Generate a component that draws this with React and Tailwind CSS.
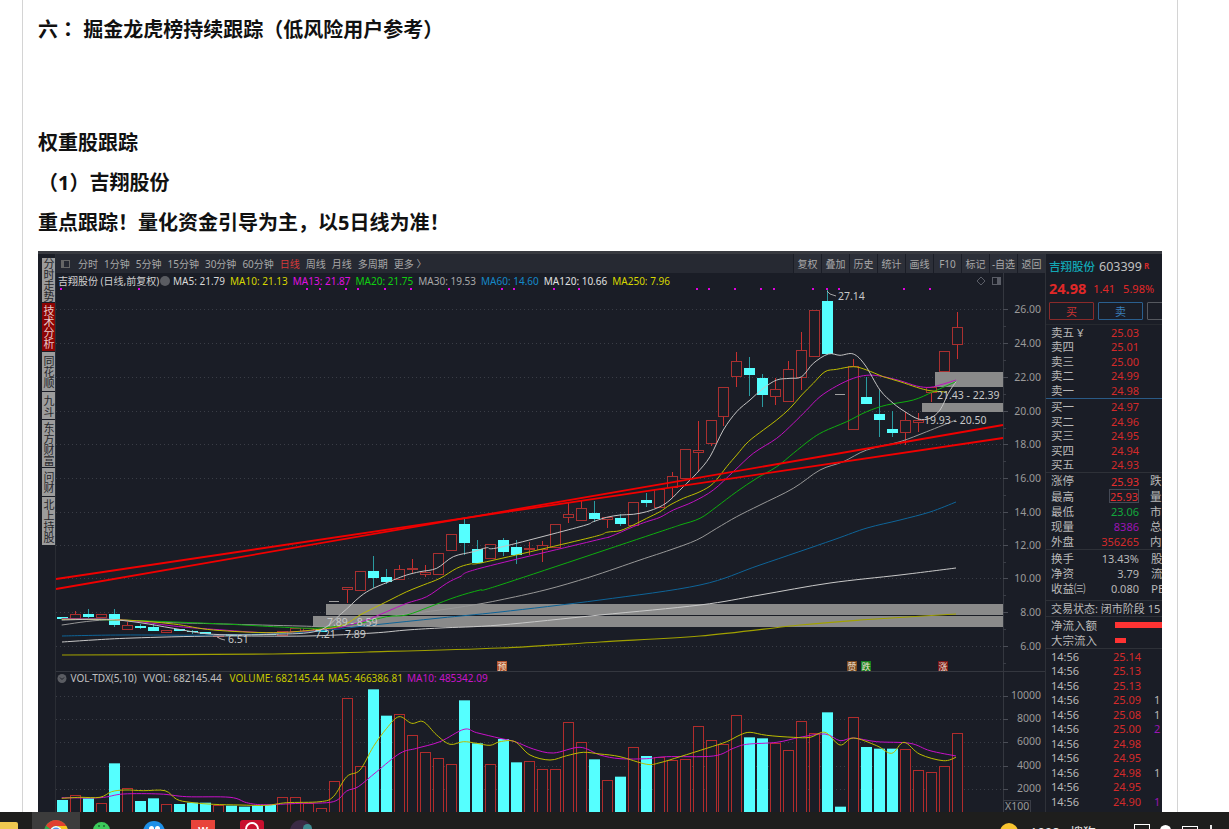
import React from "react";

const xAt = (i) => Math.round(62 + 12.97 * i);
const z6 = (pts) => pts.map(([x, y]) => [40 + x / 3, 500 + y / 3]);
const z7 = (pts) => pts.map(([x, y]) => [500 + x / 3, 280 + y / 3]);
const z4 = (pts) => pts.map(([x, y]) => [x / 3, 660 + y / 3]);
const z5 = (pts) => pts.map(([x, y]) => [500 + x / 3, 660 + y / 3]);

// catmull-rom through the points so the averages read as curves
const smooth = (pts) => {
  let d = `M${pts[0][0].toFixed(1)} ${pts[0][1].toFixed(1)}`;
  for (let i = 0; i < pts.length - 1; i++) {
    const p0 = pts[i - 1] || pts[i];
    const p1 = pts[i];
    const p2 = pts[i + 1];
    const p3 = pts[i + 2] || p2;
    const c1x = p1[0] + (p2[0] - p0[0]) / 6;
    const c1y = p1[1] + (p2[1] - p0[1]) / 6;
    const c2x = p2[0] - (p3[0] - p1[0]) / 6;
    const c2y = p2[1] - (p3[1] - p1[1]) / 6;
    d += ` C${c1x.toFixed(1)} ${c1y.toFixed(1)} ${c2x.toFixed(1)} ${c2y.toFixed(1)} ${p2[0].toFixed(1)} ${p2[1].toFixed(1)}`;
  }
  return d;
};

// type, body top, body bottom, wick top, wick bottom
const candles = [
  ["c", 617, 619, 617, 620], ["r", 614, 618, 611, 618], ["c", 614, 617, 609, 618], ["r", 614, 617, 614, 617],
  ["c", 614, 625, 609, 627], ["r", 625, 629, 622, 629], ["c", 626, 628, 624, 629], ["c", 627, 631, 624, 631],
  ["r", 630, 632, 630, 632], ["c", 629, 631, 629, 631], ["c", 631, 632, 630, 634], ["c", 632, 634, 632, 634],
  ["r", 635, 636, 635, 638], ["c", 634, 636, 634, 636], ["c", 634, 635, 634, 635], ["c", 634, 635, 634, 635],
  ["c", 634, 635, 634, 635], ["r", 631, 635, 631, 635], ["r", 628, 631, 628, 631], ["r", 628, 631, 628, 631],
  ["c", 629, 632, 629, 632], ["g", 601, 602, 601, 602], ["r", 587, 589, 587, 603], ["r", 571, 590, 571, 590],
  ["c", 571, 578, 556, 588], ["c", 577, 582, 569, 584], ["r", 569, 579, 565, 579], ["r", 568, 569, 559, 573],
  ["r", 572, 574, 565, 577], ["r", 553, 574, 553, 574], ["r", 534, 550, 534, 550], ["c", 524, 543, 519, 555],
  ["c", 549, 563, 540, 563], ["r", 544, 558, 544, 558], ["c", 540, 552, 538, 556], ["c", 547, 555, 540, 564],
  ["r", 548, 549, 542, 555], ["r", 545, 549, 541, 562], ["r", 524, 547, 524, 547], ["r", 514, 517, 503, 523],
  ["r", 508, 520, 501, 520], ["c", 513, 519, 501, 522], ["r", 517, 519, 517, 528], ["c", 518, 524, 514, 526],
  ["r", 502, 525, 502, 525], ["c", 500, 503, 493, 507], ["r", 489, 507, 489, 507], ["r", 476, 487, 472, 498],
  ["r", 449, 478, 449, 478], ["r", 450, 452, 421, 472], ["r", 420, 443, 420, 446], ["r", 387, 416, 387, 426],
  ["r", 361, 376, 352, 387], ["c", 368, 375, 357, 396], ["c", 378, 395, 374, 407], ["r", 389, 396, 378, 405],
  ["r", 369, 401, 361, 401], ["r", 350, 377, 332, 390], ["r", 310, 356, 310, 356], ["c", 301, 354, 290, 354],
  ["g", 394, 395, 394, 395], ["r", 366, 429, 359, 429], ["c", 397, 404, 377, 404], ["c", 414, 420, 390, 437],
  ["c", 429, 433, 411, 437], ["r", 420, 432, 412, 445], ["r", 420, 422, 413, 432], ["r", 387, 392, 387, 402],
  ["r", 351, 371, 351, 371], ["r", 327, 344, 312, 359],
];

const volumes = [
  ["c", 420], ["r", 404], ["c", 415], ["r", 430], ["c", 310], ["r", 383], ["c", 423], ["c", 415], ["r", 433], ["c", 432],
  ["c", 428], ["c", 428], ["r", 435], ["c", 437], ["c", 440], ["c", 437], ["c", 435], ["r", 412], ["r", 411], ["r", 430],
  ["r", 445], ["r", 362], ["r", 113], ["r", 317], ["c", 88], ["c", 167], ["r", 163], ["r", 226], ["r", 276], ["r", 293],
  ["r", 311], ["c", 121], ["c", 250], ["r", 312], ["c", 237], ["c", 307], ["r", 302], ["r", 326], ["r", 326], ["r", 187],
  ["r", 247], ["c", 298], ["r", 360], ["c", 350], ["r", 260], ["c", 288], ["r", 292], ["r", 300], ["r", 298], ["r", 199],
  ["r", 240], ["r", 253], ["r", 165], ["c", 232], ["c", 235], ["r", 250], ["r", 271], ["r", 184], ["r", 220], ["c", 157],
  ["c", 440], ["r", 170], ["c", 261], ["c", 266], ["c", 266], ["r", 268], ["r", 329], ["r", 335], ["r", 319], ["r", 218],
];

const ma5 = [
  ...z6([[65, 360], [200, 358], [300, 368], [400, 385], [520, 403], [700, 403], [835, 392], [905, 340], [960, 290], [1000, 265], [1060, 240], [1100, 225], [1140, 215], [1190, 205], [1240, 170], [1300, 155], [1340, 143], [1380, 142]]),
  ...z7([[240, 740], [280, 725], [320, 712], [360, 705], [400, 703], [440, 695], [480, 680], [510, 660], [550, 620], [590, 580], [630, 530], [670, 450], [710, 395], [750, 360], [790, 325], [830, 300], [870, 295], [905, 290], [940, 250], [985, 222], [1020, 226], [1060, 222], [1095, 255], [1140, 330], [1180, 370], [1215, 395], [1255, 417], [1290, 415], [1320, 390], [1345, 340], [1368, 305]]),
];
const ma10 = [
  ...z6([[65, 358], [250, 360], [400, 372], [520, 390], [700, 398], [840, 388], [895, 380], [930, 365], [960, 345], [1000, 325], [1050, 300], [1100, 275], [1150, 255], [1200, 235], [1250, 205], [1290, 192], [1340, 185]]),
  ...z7([[270, 773], [320, 757], [360, 752], [400, 735], [440, 715], [480, 695], [510, 675], [550, 655], [600, 635], [640, 610], [680, 560], [710, 525], [745, 485], [790, 450], [830, 420], [870, 385], [905, 345], [940, 310], [975, 275], [1010, 268], [1060, 260], [1100, 270], [1150, 290], [1200, 305], [1250, 322], [1290, 332], [1340, 336]]),
];
const ma13 = [
  ...z6([[65, 356], [250, 360], [400, 378], [520, 388], [700, 398], [880, 385], [930, 375], [980, 360], [1040, 335], [1100, 310], [1160, 290], [1220, 250], [1260, 230], [1320, 205]]),
  ...z7([[290, 780], [330, 770], [400, 740], [440, 725], [480, 712], [520, 690], [580, 665], [640, 630], [700, 575], [760, 520], [830, 475], [880, 430], [920, 390], [960, 350], [1010, 318], [1060, 295], [1100, 286], [1140, 288], [1200, 302], [1250, 318], [1290, 322], [1330, 312], [1368, 300]]),
];
const ma20 = [
  ...z6([[65, 356], [300, 362], [550, 372], [700, 380], [820, 385], [900, 378], [960, 370], [1040, 350], [1100, 345], [1170, 320], [1250, 290], [1320, 270], [1380, 255]]),
  ...z7([[480, 755], [540, 735], [600, 715], [650, 680], [710, 635], [770, 595], [830, 560], [880, 520], [930, 480], [970, 455], [1040, 425], [1100, 395], [1160, 375], [1240, 360], [1300, 335], [1368, 305]]),
];
const ma30 = [
  ...z6([[65, 375], [200, 360], [400, 368], [550, 372], [780, 378], [880, 380], [960, 365], [1080, 345], [1200, 330], [1300, 315], [1380, 300]]),
  [545, 590], [590, 577], [640, 560], [670, 550],
  ...z7([[590, 780], [650, 745], [710, 710], [780, 675], [880, 625], [960, 570], [1030, 545], [1100, 510], [1200, 485], [1280, 455], [1368, 420]]),
];
const ma60 = [[62, 636], [120, 635], [217, 635], [307, 632], [373, 625], [440, 618], [500, 612], [600, 600], [700, 585], [760, 565], [833, 540], [867, 528], [900, 520], [930, 512], [956, 502]];
const ma120 = [[62, 642], [93, 640], [133, 638], [217, 636], [307, 636], [373, 633], [407, 630], [440, 628], [500, 625], [600, 615], [700, 605], [760, 595], [830, 583], [900, 575], [956, 568]];
const ma250 = [[62, 655], [273, 654], [367, 652], [500, 648], [600, 642], [700, 636], [800, 625], [860, 620], [956, 614]];

const volMa5 = [
  ...z4([[185, 415], [240, 412], [300, 412], [335, 395], [375, 390], [430, 392], [495, 392], [530, 418], [570, 427], [640, 433], [720, 435], [800, 436], [860, 428], [960, 425], [1000, 410], [1040, 350], [1080, 330], [1120, 260], [1160, 205], [1197, 170], [1235, 190], [1270, 185], [1310, 225], [1350, 253], [1390, 245], [1430, 250], [1470, 256]]),
  ...z5([[0, 245], [45, 245], [90, 285], [150, 300], [200, 287], [250, 277], [300, 282], [360, 290], [440, 313], [480, 308], [540, 290], [620, 265], [680, 245], [720, 225], [750, 217], [800, 226], [880, 232], [930, 232], [975, 217], [1020, 255], [1060, 234], [1130, 257], [1175, 280], [1212, 247], [1260, 283], [1330, 302], [1368, 292]]),
];
const volMa10 = [
  ...z4([[185, 413], [300, 413], [370, 402], [480, 402], [560, 410], [690, 412], [740, 428], [790, 434], [900, 430], [1000, 425], [1040, 393], [1075, 380], [1130, 335], [1200, 280], [1250, 265], [1320, 245], [1392, 208], [1430, 218]]),
  ...z5([[0, 235], [45, 245], [100, 267], [160, 279], [240, 262], [300, 285], [360, 296], [440, 296], [500, 290], [640, 288], [700, 265], [740, 253], [830, 247], [900, 232], [975, 222], [1020, 242], [1060, 234], [1130, 245], [1230, 250], [1290, 272], [1368, 288]]),
];

const dots = [61, 139, 307, 320, 346, 358, 385, 411, 449, 502, 514, 554, 579, 697, 709, 735, 761, 774, 813, 827, 839, 904, 930];
const priceAxis = [[26, 309], [24, 343], [22, 377], [20, 411], [18, 444], [16, 478], [14, 512], [12, 545], [10, 578], [8, 612], [6, 646]];
const volAxis = [[10000, 695], [8000, 718], [6000, 741], [4000, 765], [2000, 788]];

const tabs = [
  { label: "分时走势", h: "h-[44px]" },
  { label: "技术分析", h: "h-[48px]", active: true },
  { label: "同花顺", h: "h-[39px]" },
  { label: "九斗", h: "h-[27px]" },
  { label: "东方财富", h: "h-[47px]" },
  { label: "问财", h: "h-[28px]" },
  { label: "北上持股", h: "h-[48px]" },
];

const periods = ["分时", "1分钟", "5分钟", "15分钟", "30分钟", "60分钟", "日线", "周线", "月线", "多周期", "更多 〉"];
const actions = ["复权", "叠加", "历史", "统计", "画线", "F10", "标记", "-自选", "返回"];

const legend = [
  ["MA5: 21.79", "text-[#d8d8d8]"],
  ["MA10: 21.13", "text-[#d6d600]"],
  ["MA13: 21.87", "text-[#e010e0]"],
  ["MA20: 21.75", "text-[#10d010]"],
  ["MA30: 19.53", "text-[#a8a8a8]"],
  ["MA60: 14.60", "text-[#1488c8]"],
  ["MA120: 10.66", "text-[#e0e0e0]"],
  ["MA250: 7.96", "text-[#d6d600]"],
];

const asks = [["卖五 ¥", "25.03"], ["卖四", "25.01"], ["卖三", "25.00"], ["卖二", "24.99"], ["卖一", "24.98"]];
const bids = [["买一", "24.97"], ["买二", "24.96"], ["买三", "24.95"], ["买四", "24.94"], ["买五", "24.93"]];
const quote = [
  ["涨停", "25.93", "text-[#e62e2e]", "跌"],
  ["最高", "25.93", "text-[#e62e2e]", "量"],
  ["最低", "23.06", "text-[#12a83c]", "市"],
  ["现量", "8386", "text-[#9a14b4]", "总"],
  ["外盘", "356265", "text-[#d42a2a]", "内"],
];
const ratios = [["换手", "13.43%", "股"], ["净资", "3.79", "流"], ["收益㈢", "0.080", "PE"]];
const trades = [
  ["25.14", ""], ["25.13", ""], ["25.13", ""], ["25.09", "1"], ["25.08", "1"], ["25.00", "2"],
  ["24.98", ""], ["24.95", ""], ["24.98", "1"], ["24.95", ""], ["24.90", "1"],
];

function MaLine({ pts, color, width = 1 }) {
  return <path d={smooth(pts)} fill="none" stroke={color} strokeWidth={width} strokeLinejoin="round" />;
}

function PriceChart() {
  return (
    <svg viewBox="56 273 989 560" className="block w-[989px] h-[560px] shrink-0">
      {priceAxis.map(([, y]) => (
        <line key={y} x1="56" x2="1003" y1={y + 0.5} y2={y + 0.5} stroke="#3a3d46" strokeDasharray="1 3" />
      ))}
      {volAxis.map(([, y]) => (
        <line key={y} x1="56" x2="1003" y1={y + 1.5} y2={y + 1.5} stroke="#3a3d46" strokeDasharray="1 3" />
      ))}
      <line x1="1003.5" x2="1003.5" y1="273" y2="812" stroke="#34373f" />
      <line x1="56" x2="1045" y1="671.5" y2="671.5" stroke="#34373f" />

      {/* support zones */}
      <rect x="326" y="604" width="677" height="11" fill="#8a8a8a" />
      <rect x="313" y="616" width="690" height="11" fill="#8a8a8a" />
      <rect x="935" y="372" width="68" height="15" fill="#8a8a8a" />
      <rect x="922" y="403" width="81" height="9" fill="#8a8a8a" />

      {dots.map((x) => (
        <rect key={x} x={x - 1} y="288" width="2" height="2" fill="#e000e0" />
      ))}

      {candles.map(([type, top, bot, wTop, wBot], i) => {
        const x = xAt(i);
        if (type === "g") {
          return <rect key={i} x={x - 5} y={top} width="10" height="1" fill="#a0a0a0" />;
        }
        if (type === "c") {
          return (
            <g key={i}>
              <line x1={x + 0.5} x2={x + 0.5} y1={wTop} y2={wBot} stroke="#2a9aa0" />
              <rect x={x - 5} y={top} width="11" height={bot - top} fill="#55ffff" />
            </g>
          );
        }
        return (
          <g key={i}>
            <line x1={x + 0.5} x2={x + 0.5} y1={wTop} y2={top} stroke="#c8302f" />
            <line x1={x + 0.5} x2={x + 0.5} y1={bot} y2={wBot} stroke="#c8302f" />
            <rect x={x - 4.5} y={top + 0.5} width="10" height={bot - top} fill="#1a1d26" stroke="#a83030" />
          </g>
        );
      })}

      <MaLine pts={ma250} color="#a0a000" width={1.2} />
      <MaLine pts={ma120} color="#c8c8c8" />
      <MaLine pts={ma60} color="#0e6498" />
      <MaLine pts={ma30} color="#989898" />
      <MaLine pts={ma20} color="#0eae0e" />
      <MaLine pts={ma13} color="#c010c0" />
      <MaLine pts={ma10} color="#bcbc00" />
      <MaLine pts={ma5} color="#c4c4c4" />

      <line x1="56" y1="589" x2="1003" y2="425" stroke="#f00000" strokeWidth="1.8" />
      <line x1="56" y1="579" x2="1003" y2="438" stroke="#f00000" strokeWidth="1.8" />

      {/* extreme and zone labels */}
      <g fill="#c8c8c8" fontSize="10.5">
        <text x="838" y="300">27.14</text>
        <polyline points="827,291 830,294 836,296" fill="none" stroke="#c8c8c8" strokeWidth="0.8" />
        <text x="937" y="398.5">21.43 - 22.39</text>
        <text x="924" y="423.5">19.93 - 20.50</text>
        <text x="327" y="626">7.89 - 8.59</text>
        <text x="315" y="638">7.21</text>
        <text x="345" y="638">7.89</text>
        <text x="228" y="643">6.51</text>
        <polyline points="217,637 221,639 225,640" fill="none" stroke="#c8c8c8" strokeWidth="0.8" />
      </g>

      <g fill="none" stroke="#5a5d66">
        <path d="M981 277 l4 4 -4 4 -4 -4 z" />
        <rect x="992.5" y="277.5" width="8" height="7" />
        <rect x="997" y="278" width="3" height="6" fill="#5a5d66" stroke="none" />
      </g>

      {priceAxis.map(([v, y]) => (
        <g key={v}>
          <line x1="1003" x2="1008" y1={y + 0.5} y2={y + 0.5} stroke="#4a4d56" />
          <line x1="1003" x2="1006" y1={y + 17.5} y2={y + 17.5} stroke="#3a3d46" />
          <text x="1041" y={y + 4} fill="#9a9a9a" fontSize="10.5" textAnchor="end">{v}.00</text>
        </g>
      ))}

      {/* signal markers */}
      <g fontSize="9" textAnchor="middle" fill="#f0e0d0">
        <rect x="497" y="661" width="10" height="10" fill="#b0502a" />
        <text x="502" y="669.5">预</text>
        <rect x="847" y="661" width="10" height="10" fill="#7c4a1e" />
        <text x="852" y="669.5">赞</text>
        <rect x="861" y="661" width="10" height="10" fill="#14801e" />
        <text x="866" y="669.5">跌</text>
        <rect x="938" y="661" width="10" height="10" fill="#7a1416" />
        <text x="943" y="669.5">涨</text>
      </g>

      {/* volume */}
      <circle cx="62" cy="678.5" r="4.5" fill="#5a5c62" />
      <path d="M60 677.5 l2 2 2 -2" fill="none" stroke="#1a1d26" />
      <text y="682" fontSize="10">
        <tspan x="70.5" fill="#c0c0c0">VOL-TDX(5,10)</tspan>
        <tspan x="143" fill="#c0c0c0">VVOL: 682145.44</tspan>
        <tspan x="229.5" fill="#c8c800">VOLUME: 682145.44</tspan>
        <tspan x="328" fill="#c8c800">MA5: 466386.81</tspan>
        <tspan x="407" fill="#c814c8">MA10: 485342.09</tspan>
      </text>

      {volumes.map(([type, z], i) => {
        const x = xAt(i);
        const top = 660 + z / 3;
        if (type === "c") {
          return <rect key={i} x={x - 5} y={top} width="11" height={830 - top} fill="#55ffff" />;
        }
        return <rect key={i} x={x - 4.5} y={Math.round(top) + 0.5} width="10" height={830 - top} fill="#1a1d26" stroke="#b02c2c" />;
      })}

      <MaLine pts={volMa10} color="#c810c8" />
      <MaLine pts={volMa5} color="#bcbc00" />

      {volAxis.map(([v, y]) => (
        <g key={v}>
          <line x1="1003" x2="1008" y1={y + 1.5} y2={y + 1.5} stroke="#4a4d56" />
          <text x="1041" y={y + 4} fill="#9a9a9a" fontSize="10.5" textAnchor="end">{v}</text>
        </g>
      ))}
      <rect x="1003.5" y="800.5" width="27" height="12" fill="none" stroke="#3a3d46" />
      <text x="1005" y="810" fill="#9a9a9a" fontSize="10.5">X100</text>
    </svg>
  );
}

function BookRow({ label, price, h }) {
  return (
    <div className={`flex items-center ${h} pl-[5px] text-[#b8b8b8] shrink-0`}>
      <span className="w-[60px] whitespace-nowrap text-[11.5px]">{label}</span>
      <span className="w-[28px] text-right text-[#d42a2a] text-[11px]">{price}</span>
    </div>
  );
}

function SidePanel() {
  return (
    <div className="w-[117px] shrink-0 flex flex-col overflow-hidden border-l border-[#2e3138] text-[11px] leading-none">
      <div className="flex items-center h-[26px] shrink-0 pl-[3px] whitespace-nowrap">
        <span className="text-[#12a6b4] text-[11.5px] font-medium">吉翔股份</span>
        <span className="ml-[4px] text-[#c0c0c0] text-[12.5px]">603399</span>
        <span className="ml-[2px] text-[#d42a2a] text-[8px] font-bold mb-[3px]">R</span>
      </div>
      <div className="flex items-center h-[16px] shrink-0 pl-[3px] text-[#e02828] whitespace-nowrap">
        <span className="text-[14.5px] font-bold">24.98</span>
        <span className="ml-[7px]">1.41</span>
        <span className="ml-[8px]">5.98%</span>
      </div>
      <div className="flex gap-[4px] mt-[6px] pl-[3px] h-[18px] shrink-0">
        <div className="w-[45px] shrink-0 border border-[#8a2a2a] rounded-[1px] flex items-center justify-center text-[#c83232]">买</div>
        <div className="w-[45px] shrink-0 border border-[#2a5f8f] rounded-[1px] flex items-center justify-center text-[#3a7fb8]">卖</div>
        <div className="w-[30px] shrink-0 border border-[#55585f] rounded-[1px]" />
      </div>
      <div className="mt-[4px] border-t border-[#26292f] shrink-0" />
      {asks.map(([label, price]) => (
        <BookRow key={label} label={label} price={price} h="h-[14.5px]" />
      ))}
      <div className="border-t border-[#2a5a86] shrink-0" />
      <div className="h-[1px] shrink-0" />
      {bids.map(([label, price]) => (
        <BookRow key={label} label={label} price={price} h="h-[14.5px]" />
      ))}
      <div className="border-t border-[#2e3138] shrink-0" />
      <div className="h-[0.5px] shrink-0" />
      {quote.map(([label, value, color, next]) => (
        <div key={label} className="flex items-center h-[15.2px] pl-[5px] shrink-0 text-[#b8b8b8] text-[11.5px] whitespace-nowrap">
          <span className="w-[58px] shrink-0">{label}</span>
          <span className={`w-[30px] shrink-0 h-[14px] flex items-center justify-end text-[11px] ${color} ${label === "最高" ? "border border-[#444955]" : ""}`}>
            {value}
          </span>
          <span className="ml-[11px]">{next}</span>
        </div>
      ))}
      <div className="border-t border-[#2e3138] shrink-0" />
      <div className="h-[0.5px] shrink-0" />
      {ratios.map(([label, value, next]) => (
        <div key={label} className="flex items-center h-[15px] pl-[5px] shrink-0 text-[#b8b8b8] text-[11.5px] whitespace-nowrap">
          <span className="w-[59px] shrink-0">{label}</span>
          <span className="w-[29px] shrink-0 flex justify-end text-[11px]">{value}</span>
          <span className="ml-[12px]">{next}</span>
        </div>
      ))}
      <div className="mt-[4px] border-t border-[#2e3138] shrink-0" />
      <div className="flex items-center h-[15px] pl-[5px] shrink-0 text-[#b8b8b8] text-[11px] whitespace-nowrap">交易状态: 闭市阶段 15</div>
      <div className="border-t border-[#2e3138] shrink-0" />
      <div className="flex items-center h-[15px] mt-[1px] pl-[5px] shrink-0 text-[#b8b8b8] text-[11.5px] whitespace-nowrap">
        <span className="w-[64px] shrink-0">净流入额</span>
        <span className="w-[47px] h-[6px] bg-[#ff3333]" />
      </div>
      <div className="flex items-center h-[15px] pl-[5px] shrink-0 text-[#b8b8b8] text-[11.5px] whitespace-nowrap">
        <span className="w-[64px] shrink-0">大宗流入</span>
        <span className="w-[11px] h-[5px] bg-[#ff3333]" />
      </div>
      <div className="border-t border-[#2e3138] shrink-0" />
      {trades.map(([price, vol], i) => (
        <div key={i} className="flex items-center h-[14.5px] pl-[5px] shrink-0 text-[#b8b8b8] whitespace-nowrap">
          <span className="w-[62px] shrink-0">14:56</span>
          <span className="w-[28px] shrink-0 text-right text-[#d42a2a]">{price}</span>
          <span className={`ml-[13px] ${vol === "2" || i === 10 ? "text-[#9a14b4]" : ""}`}>{vol}</span>
        </div>
      ))}
    </div>
  );
}

function Quotes() {
  return (
    <div className="flex w-[1124px] h-[600px] bg-[#1a1d26] border-t-[3px] border-[#383a40] font-['Noto_Sans','Noto_Sans_CJK_SC',sans-serif]">
      <div className="w-[18px] shrink-0 flex flex-col pl-[4px] pt-[4px] gap-[1px] border-r border-[#2a2d34]">
        {tabs.map((t) => (
          <div
            key={t.label}
            className={`${t.h} w-[13px] flex items-center justify-center text-[11px] leading-[13px] [writing-mode:vertical-rl] whitespace-nowrap ${
              t.active ? "bg-[#8c0404] text-[#e8c8c8]" : "bg-[#9c9c9c] text-[#26262a]"
            }`}
          >
            {t.label}
          </div>
        ))}
      </div>
      <div className="w-[989px] shrink-0 flex flex-col">
        <div className="flex items-center justify-between h-[19px] shrink-0 bg-[#262932] text-[10px] text-[#a8a8a8] whitespace-nowrap">
          <div className="flex items-center gap-[6px] pl-[5px]">
            <span className="w-[9px] h-[8px] border border-[#666] border-l-[3px] mr-[2px]" />
            {periods.map((p) => (
              <span key={p} className={p === "日线" ? "text-[#d83a3a]" : ""}>{p}</span>
            ))}
          </div>
          <div className="flex items-stretch h-full">
            {actions.map((a) => (
              <span key={a} className="h-full w-[28px] flex items-center justify-center bg-[#2c2f38] border-l border-[#1a1d26]">{a}</span>
            ))}
          </div>
        </div>
        <div className="flex items-center h-[15px] shrink-0 -mb-[15px] relative z-10 pl-[2px] text-[10px] text-[#d0d0d0] whitespace-nowrap">
          <span className="w-[102px] shrink-0">吉翔股份 (日线,前复权)</span>
          <span className="w-[10px] h-[10px] rounded-full bg-[#5a5c62] shrink-0 mr-[3px]" />
          {legend.map(([text, color]) => (
            <span key={text} className={`${color} mr-[5px]`}>{text}</span>
          ))}
        </div>
        <PriceChart />
      </div>
      <SidePanel />
    </div>
  );
}

function ChromeIcon() {
  return (
    <svg viewBox="0 0 24 24" className="w-[24px] h-[24px] shrink-0">
      <circle cx="12" cy="12" r="12" fill="#2da94f" />
      <path d="M2 5.5 A12 12 0 0 1 22.4 6 L12 6 A6 6 0 0 0 6.6 9.4 Z" fill="#e0402f" />
      <path d="M22.4 6 A12 12 0 0 1 12 24 L17 15 A6 6 0 0 0 12 6 Z" fill="#f8c71c" />
      <circle cx="12" cy="12" r="6" fill="#fff" />
      <circle cx="12" cy="12" r="4.6" fill="#4a8fe8" />
    </svg>
  );
}

function Taskbar() {
  return (
    <div className="flex h-[17px] shrink-0 bg-[#1e1e1d] overflow-hidden whitespace-nowrap">
      <div className="w-[18px] h-[8px] mt-[10px] bg-[#f0c850] rounded-tr-[2px]" />
      <div className="ml-[14px] w-[48px] h-full bg-[#3c3c3c] flex justify-center pt-[8px]">
        <ChromeIcon />
      </div>
      <div className="ml-[13px] mt-[10px] w-[17px] h-[17px] rounded-full bg-[#3ccb5a] shrink-0 flex justify-center gap-[3px] pt-[3px]">
        <span className="w-[2px] h-[2px] rounded-full bg-[#1a6a30]" />
        <span className="w-[2px] h-[2px] rounded-full bg-[#1a6a30]" />
      </div>
      <div className="ml-[33px] mt-[9px] w-[22px] h-[22px] rounded-full bg-[#1e90e8] shrink-0 flex justify-center gap-[1px] pt-[5px]">
        <span className="w-[5px] h-[6px] rounded-full bg-white" />
        <span className="w-[5px] h-[6px] rounded-full bg-white" />
      </div>
      <div className="ml-[26px] mt-[8px] w-[24px] h-[24px] bg-[#e8443a] shrink-0 flex justify-center pt-[6px] text-[10px] leading-none font-bold text-white">W</div>
      <div className="ml-[25px] mt-[8px] w-[24px] h-[24px] rounded-[3px] bg-[#c8102e] shrink-0 flex justify-center pt-[2px]">
        <span className="w-[14px] h-[14px] rounded-full border-[2px] border-white" />
      </div>
      <div className="ml-[26px] mt-[8px] w-[22px] h-[22px] rounded-full bg-[#3a2a44] shrink-0 flex justify-end">
        <span className="w-[9px] h-[9px] mt-[4px] rounded-full bg-[#3d8a8f]" />
      </div>
      <div className="ml-[688px] mt-[11px] w-[18px] h-[18px] rounded-full bg-[#f8c430] shrink-0" />
      <span className="ml-[12px] mt-[11px] text-[13px] leading-[18px] text-[#e8e8e8] font-['Noto_Sans','Noto_Sans_CJK_SC',sans-serif]">1098 · 搜狗</span>
      <div className="ml-[38px] mt-[12px] w-[16px] h-[14px] border border-white shrink-0" />
      <div className="ml-[10px] mt-[13px] w-[11px] h-[11px] rounded-full bg-white shrink-0" />
      <div className="ml-[11px] mt-[14px] w-[16px] h-[12px] border border-white shrink-0" />
      <div className="ml-[12px] mt-[13px] w-[10px] h-[12px] border-l-2 border-[#e8e8e8] shrink-0" />
    </div>
  );
}

export default function App() {
  return (
    <div className="flex flex-col h-[829px] overflow-hidden bg-white font-['Noto_Sans','Noto_Sans_CJK_SC',sans-serif]">
      <div className="flex-1 min-h-0 overflow-hidden">
        <div className="ml-[22px] w-[1156px] h-full border-x border-[#d4d4d4] pl-[15px] text-[20px] leading-[40px] font-bold text-[#111]">
          <p className="pt-[10px]">
            六<span className="leading-none font-['Noto_Sans_CJK_TC',sans-serif]">：</span> 掘金龙虎榜持续跟踪（低风险用户参考）
          </p>
          <p className="mt-[73px]">权重股跟踪</p>
          <p>（1）吉翔股份</p>
          <p>重点跟踪！量化资金引导为主，以5日线为准！</p>
          <div className="mt-[8px] font-normal">
            <Quotes />
          </div>
        </div>
      </div>
      <Taskbar />
    </div>
  );
}
